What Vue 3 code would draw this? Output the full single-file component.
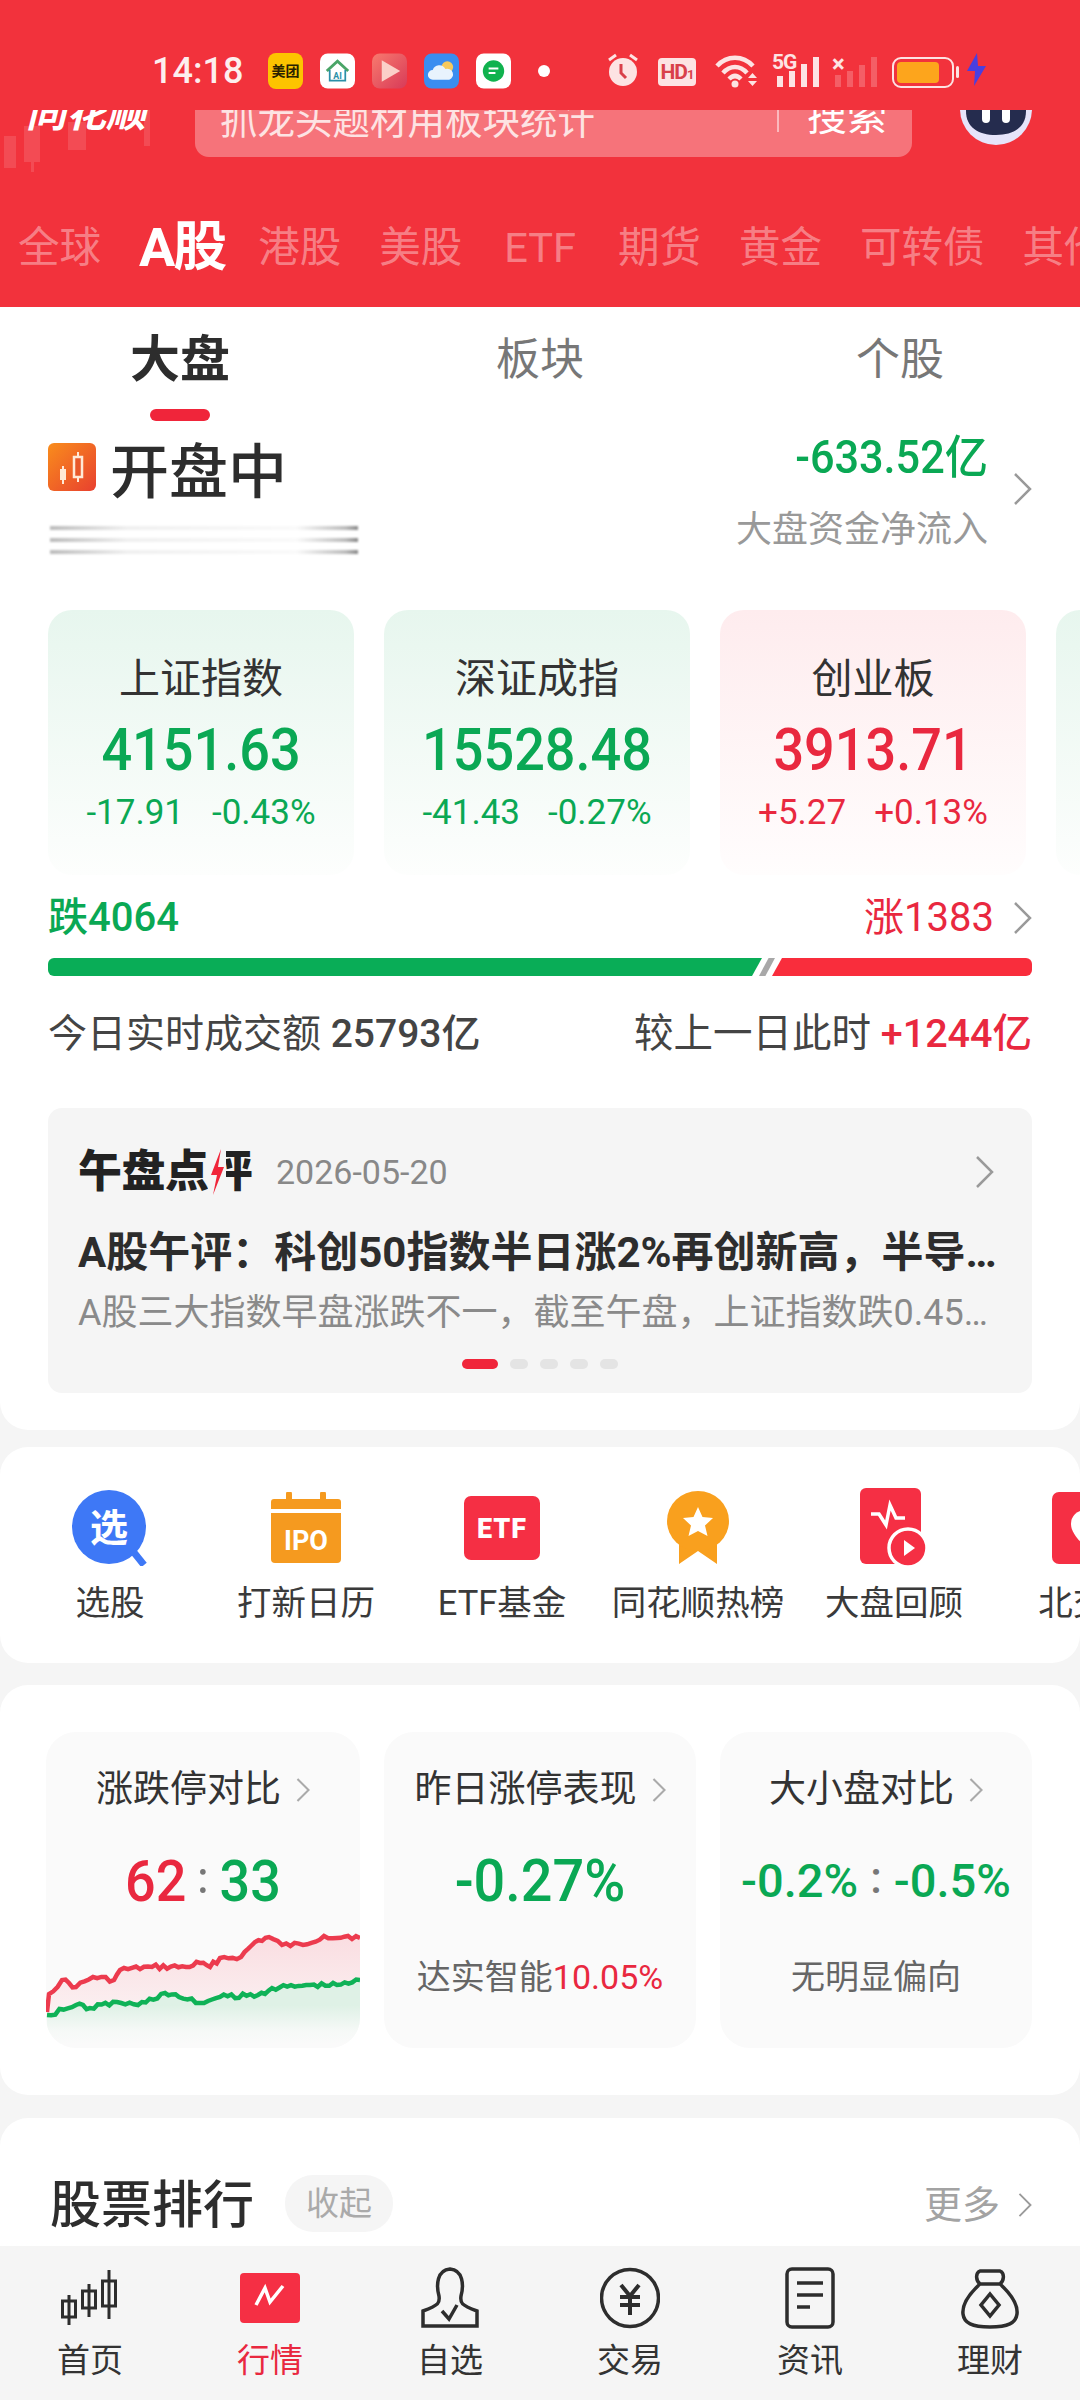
<script setup>
const marketTabs = ['全球', 'A股', '港股', '美股', 'ETF', '期货', '黄金', '可转债', '其他']
const indexes = [
  { name: '上证指数', value: '4151.63', diff: '-17.91', pct: '-0.43%', down: true },
  { name: '深证成指', value: '15528.48', diff: '-41.43', pct: '-0.27%', down: true },
  { name: '创业板', value: '3913.71', diff: '+5.27', pct: '+0.13%', down: false }
]
const shortcuts = [
  { key: 'pick', label: '选股' },
  { key: 'ipo', label: '打新日历' },
  { key: 'etf', label: 'ETF基金' },
  { key: 'rank', label: '同花顺热榜' },
  { key: 'review', label: '大盘回顾' },
  { key: 'north', label: '北交所' }
]

// 折线带一点抖动，种子固定保证每次结果一样
const jagged = (points, seed) => {
  let s = seed
  const rand = () => {
    s = (s * 9301 + 49297) % 233280
    return s / 233280 - 0.5
  }
  const out = []
  for (let i = 0; i < points.length - 1; i++) {
    const [x0, y0] = points[i]
    const [x1, y1] = points[i + 1]
    const steps = Math.max(1, Math.round((x1 - x0) / 4))
    for (let j = 0; j < steps; j++) {
      const t = j / steps
      out.push([x0 + (x1 - x0) * t, y0 + (y1 - y0) * t + (j === 0 ? 0 : rand() * 5)])
    }
  }
  out.push(points[points.length - 1])
  return out.map(p => p[0].toFixed(1) + ' ' + p[1].toFixed(1))
}
const redPts = jagged([[1, 80], [3, 62], [16, 48], [30, 55], [47, 45], [68, 48], [74, 38], [106, 35], [140, 35], [154, 31], [164, 35], [174, 26], [195, 25], [209, 10], [223, 5], [236, 13], [257, 13], [278, 4], [291, 6], [302, 4], [314, 6]], 17)
const greenPts = jagged([[1, 83], [30, 73], [44, 76], [71, 70], [92, 73], [119, 61], [133, 65], [154, 71], [174, 65], [212, 63], [226, 56], [264, 53], [291, 53], [314, 48]], 41)
const redLine = 'M' + redPts.join(' L')
const greenLine = 'M' + greenPts.join(' L')
const redArea = redLine + ' L' + greenPts.slice().reverse().join(' L') + ' Z'
const greenArea = greenLine + ' L314 112 L1 112 Z'
</script>

<template>
  <div class="page">
    <header class="top">
      <div class="status">
        <span class="time">14:18</span>
        <span class="app app-meituan">美团</span>
        <svg class="app" viewBox="0 0 36 36">
          <rect width="36" height="36" rx="8" fill="#fff" />
          <path d="M7 18 L18 8 L29 18" fill="none" stroke="#4aa567" stroke-width="3" />
          <path d="M10 17 V28 H26 V17" fill="none" stroke="#2a8fa8" stroke-width="1.8" />
          <text x="18" y="26" text-anchor="middle" font-size="9" font-weight="700" fill="#2a8fa8">AI</text>
        </svg>
        <svg class="app" viewBox="0 0 36 36">
          <defs>
            <linearGradient id="playBg" x1="0" y1="0" x2="1" y2="1">
              <stop offset="0" stop-color="#f87a6e" />
              <stop offset="1" stop-color="#d83a58" />
            </linearGradient>
          </defs>
          <rect width="36" height="36" rx="8" fill="url(#playBg)" />
          <path d="M10 7 L29 18 L10 29 Z" fill="#fbd0c8" />
        </svg>
        <svg class="app" viewBox="0 0 36 36">
          <rect width="36" height="36" rx="8" fill="#3a8df0" />
          <circle cx="24" cy="14" r="6" fill="#f7c95c" />
          <path d="M9 27 a5 5 0 0 1 0-10 a7 7 0 0 1 13-1 a5.5 5.5 0 0 1 4 11 Z" fill="#e8f3fd" />
        </svg>
        <svg class="app" viewBox="0 0 36 36">
          <rect width="36" height="36" rx="8" fill="#fff" />
          <circle cx="18" cy="18" r="11" fill="#10b24e" />
          <path d="M13 15.500 H23 M13 20 H20" stroke="#fff" stroke-width="2" />
        </svg>
        <span class="dot"></span>
        <svg class="ic-alarm" viewBox="0 0 32 34">
          <circle cx="16" cy="19" r="14" fill="#fde3e3" />
          <path d="M2 7 L9 2 M30 7 L23 2" stroke="#fde3e3" stroke-width="3" />
          <path d="M14 11 V20 L19 25" fill="none" stroke="#d9404a" stroke-width="3" />
        </svg>
        <span class="hd">HD<small>1</small></span>
        <svg class="ic-wifi" viewBox="0 0 44 35">
          <path d="M2 13 C12 2 28 2 38 13 M8 20 C15 12 25 12 32 20 M14 26 C18 22 22 22 26 26" fill="none" stroke="#fde3e3" stroke-width="4.500" />
          <circle cx="20" cy="31" r="3.500" fill="#fde3e3" />
          <path d="M33 25 L37.500 20 L42 25 Z M33 28 H42 L37.500 33 Z" fill="#fde3e3" />
        </svg>
        <span class="signal">
          <i class="g5">5G</i>
          <b style="height: 11px"></b><b style="height: 16px"></b><b style="height: 23px"></b><b style="height: 30px"></b>
        </span>
        <span class="signal off">
          <i class="x">×</i>
          <b style="height: 12px"></b><b style="height: 16px"></b><b style="height: 22px"></b><b style="height: 30px"></b>
        </span>
        <span class="battery"><span class="level"></span></span>
        <svg class="ic-bolt" viewBox="0 0 21 33">
          <path d="M11 0 L1 18 H9 L8 33 L20 13 H12 Z" fill="#4a3fe0" />
        </svg>
      </div>

      <div class="search-row">
        <div class="logo">
          <span class="logo-text">同花顺</span>
          <svg class="logo-bg" viewBox="0 0 160 64">
            <g fill="#fff" opacity="0.12">
              <rect x="4" y="26" width="12" height="32" />
              <rect x="24" y="16" width="16" height="36" />
              <rect x="31" y="8" width="3" height="54" />
              <rect x="68" y="12" width="18" height="28" />
              <rect x="144" y="0" width="6" height="36" />
            </g>
          </svg>
        </div>
        <div class="search">
          <span class="search-text">抓龙头题材用板块统计</span>
          <span class="search-btn">搜索</span>
        </div>
        <svg class="robot" viewBox="0 0 72 72">
          <circle cx="36" cy="36" r="36" fill="#e6e4fa" />
          <path d="M6 0 H66 V38 C66 54 54 62 36 62 C18 62 6 54 6 38 Z" fill="#252c4e" />
          <rect x="22" y="30" width="8" height="20" rx="4" fill="#fff" />
          <rect x="42" y="30" width="8" height="20" rx="4" fill="#fff" />
        </svg>
      </div>

      <nav class="market-tabs">
        <span v-for="tab in marketTabs" :key="tab" class="market-tab" :class="{ active: tab === 'A股', latin: tab === 'ETF' }">{{ tab }}</span>
      </nav>
    </header>

    <section class="panel">
      <div class="tabs">
        <div class="tab active">大盘<span class="tab-line"></span></div>
        <div class="tab">板块</div>
        <div class="tab">个股</div>
      </div>

      <div class="state">
        <div class="state-left">
          <div class="state-title">
            <svg class="state-icon" viewBox="0 0 48 48">
              <defs>
                <linearGradient id="stateBg" x1="0" y1="0" x2="1" y2="1">
                  <stop offset="0" stop-color="#f98d1c" />
                  <stop offset="1" stop-color="#e8402f" />
                </linearGradient>
              </defs>
              <rect width="48" height="48" rx="6" fill="url(#stateBg)" />
              <path d="M15 23 V41 M30 9 V39" stroke="#ffe9d6" stroke-width="2" />
              <rect x="12" y="26" width="6" height="11" fill="#ffe9d6" />
              <rect x="26" y="14" width="8" height="20" fill="#e8582a" stroke="#ffe9d6" stroke-width="2.500" />
            </svg>
            <span class="state-text">开盘中</span>
          </div>
          <div class="smear">
            <i></i><i></i><i></i>
          </div>
        </div>
        <div class="state-right">
          <div class="flow-num">-633.52亿</div>
          <div class="flow-label">大盘资金净流入</div>
        </div>
        <svg class="chev state-chev" viewBox="0 0 19 32"><path d="M2 1 L17 16 L2 31" /></svg>
      </div>

      <div class="index-row">
        <div v-for="item in indexes" :key="item.name" class="index-card" :class="item.down ? 'down' : 'up'">
          <div class="index-name">{{ item.name }}</div>
          <div class="index-value">{{ item.value }}</div>
          <div class="index-sub"><span>{{ item.diff }}</span><span>{{ item.pct }}</span></div>
        </div>
        <div class="index-card down"></div>
      </div>

      <div class="count-row">
        <span class="green">跌4064</span>
        <span class="count-up"><span class="red">涨1383</span><svg class="chev" viewBox="0 0 19 32"><path d="M2 1 L17 16 L2 31" /></svg></span>
      </div>
      <div class="ratio">
        <div class="ratio-green"></div>
        <div class="ratio-gap"></div>
        <div class="ratio-red"></div>
      </div>

      <div class="turnover">
        <span class="turnover-left">今日实时成交额 <b>25793亿</b></span>
        <span>较上一日此时 <b class="red">+1244亿</b></span>
      </div>

      <div class="news">
        <div class="news-head">
          <span class="news-logo">午盘点评
            <svg class="news-bolt" viewBox="0 0 18 48">
              <rect width="18" height="48" fill="#f5f5f5" />
              <path d="M13 1 L3 27 H9 L5 47 L16 19 H10 Z" fill="#f0253a" />
            </svg>
          </span>
          <span class="news-date">2026-05-20</span>
          <svg class="chev news-chev" viewBox="0 0 19 32"><path d="M2 1 L17 16 L2 31" /></svg>
        </div>
        <div class="news-title">A股午评：科创50指数半日涨2%再创新高，半导体板块走强</div>
        <div class="news-desc">A股三大指数早盘涨跌不一，截至午盘，上证指数跌0.45%，深成指跌</div>
        <div class="news-dots"><i class="on"></i><i></i><i></i><i></i><i></i></div>
      </div>
    </section>

    <section class="card shortcuts">
      <div v-for="item in shortcuts" :key="item.key" class="shortcut">
        <div class="shortcut-icon">
          <svg v-if="item.key === 'pick'" width="76" height="76" viewBox="0 0 76 76">
            <circle cx="37" cy="37" r="37" fill="#3e78f6" />
            <path d="M60 60 L72 75" stroke="#3e78f6" stroke-width="7" />
            <text x="37" y="51" text-anchor="middle" font-size="38" font-weight="700" fill="#fff" font-family="Noto Sans CJK SC, sans-serif">选</text>
          </svg>
          <svg v-else-if="item.key === 'ipo'" width="70" height="72" viewBox="0 0 70 72">
            <path d="M0 10 a3 3 0 0 1 3-3 H15 V2 a3 3 0 0 1 6 0 V7 H49 V2 a3 3 0 0 1 6 0 V7 H67 a3 3 0 0 1 3 3 V17 H0 Z" fill="#f59a1f" />
            <path d="M0 21 H70 V67 a4 4 0 0 1-4 4 H4 a4 4 0 0 1-4-4 Z" fill="#f59a1f" />
            <text x="35" y="58" text-anchor="middle" font-size="27" font-weight="700" fill="#fff" font-family="Roboto, sans-serif">IPO</text>
          </svg>
          <svg v-else-if="item.key === 'etf'" width="76" height="64" viewBox="0 0 76 64">
            <rect width="76" height="64" rx="7" fill="#f52f44" />
            <text x="38" y="42" text-anchor="middle" font-size="27" font-weight="900" fill="#fff" font-family="Roboto, sans-serif" letter-spacing="1">ETF</text>
          </svg>
          <svg v-else-if="item.key === 'rank'" width="62" height="74" viewBox="0 0 62 74">
            <path d="M12 50 V73 L31 60 L50 73 V50 Z" fill="#f9a01e" />
            <ellipse cx="31" cy="30" rx="31" ry="30" fill="#f9a01e" />
            <path d="M31 16 L35.500 26 L46 27 L38 34.500 L40.500 45 L31 40 L21.500 45 L24 34.500 L16 27 L26.500 26 Z" fill="#fff" />
          </svg>
          <svg v-else-if="item.key === 'review'" width="68" height="80" viewBox="0 0 68 80">
            <rect x="0" y="0" width="61" height="76" rx="6" fill="#f52f44" />
            <path d="M11 26 H19 L26 37 L30 17 L36 30 H45" fill="none" stroke="#fff" stroke-width="3.500" />
            <circle cx="48" cy="60" r="19" fill="#f52f44" stroke="#fff" stroke-width="3.500" />
            <path d="M44 52 L55 60 L44 68 Z" fill="#fff" />
          </svg>
          <svg v-else width="76" height="72" viewBox="0 0 76 72">
            <rect width="76" height="72" rx="7" fill="#f52f44" />
            <path d="M19 32 a14 14 0 1 1 28 0 c0 11-14 22-14 22 s-14-11-14-22 Z" fill="#fff" />
          </svg>
        </div>
        <div class="shortcut-label">{{ item.label }}</div>
      </div>
    </section>

    <section class="card compare">
      <div class="compare-card">
        <div class="compare-title">涨跌停对比<svg class="chev" viewBox="0 0 19 32"><path d="M2 1 L17 16 L2 31" /></svg></div>
        <div class="compare-num"><span class="red">62</span><em>:</em><span class="green">33</span></div>
        <svg class="compare-chart" viewBox="0 0 314 112" preserveAspectRatio="none">
          <defs>
            <linearGradient id="redFill" x1="0" y1="0" x2="0" y2="1">
              <stop offset="0" stop-color="#fadde1" />
              <stop offset="1" stop-color="#fbf1f2" />
            </linearGradient>
            <linearGradient id="greenFill" x1="0" y1="0" x2="0" y2="1">
              <stop offset="0.4" stop-color="#dff1e6" />
              <stop offset="0.8" stop-color="#f6f9f7" />
              <stop offset="1" stop-color="#fafafa" />
            </linearGradient>
          </defs>
          <path :d="greenArea" fill="url(#greenFill)" />
          <path :d="redArea" fill="url(#redFill)" />
          <path :d="redLine" fill="none" stroke="#ec3b4e" stroke-width="4.500" />
          <path :d="greenLine" fill="none" stroke="#0fb257" stroke-width="4.500" />
        </svg>
      </div>
      <div class="compare-card">
        <div class="compare-title">昨日涨停表现<svg class="chev" viewBox="0 0 19 32"><path d="M2 1 L17 16 L2 31" /></svg></div>
        <div class="compare-num green single">-0.27%</div>
        <div class="compare-sub">达实智能<span class="red">10.05%</span></div>
      </div>
      <div class="compare-card">
        <div class="compare-title">大小盘对比<svg class="chev" viewBox="0 0 19 32"><path d="M2 1 L17 16 L2 31" /></svg></div>
        <div class="compare-num small green">-0.2%<em>:</em>-0.5%</div>
        <div class="compare-sub">无明显偏向</div>
      </div>
    </section>

    <section class="rank">
      <span class="rank-title">股票排行</span>
      <span class="rank-pill">收起</span>
      <span class="rank-more">更多<svg class="chev" viewBox="0 0 19 32"><path d="M2 1 L17 16 L2 31" /></svg></span>
    </section>

    <nav class="bottom">
      <div class="bottom-item">
        <svg width="60" height="62" viewBox="0 0 60 62">
          <g fill="none" stroke="#2d2d2d" stroke-width="3">
            <path d="M9 28 V58 M2.500 34 H15.500 V50 H2.500 Z" />
            <path d="M29 17 V50 M22.500 24 H35.500 V41 H22.500 Z" />
            <path d="M49 3 V52 M42.500 14 H55.500 V39 H42.500 Z" />
          </g>
        </svg>
        <span>首页</span>
      </div>
      <div class="bottom-item active">
        <svg width="60" height="62" viewBox="0 0 60 62">
          <rect y="6" width="60" height="50" rx="4" fill="#f52f44" />
          <path d="M16 38 L25 21 L30 35 L43 19" fill="none" stroke="#fff" stroke-width="3.500" />
        </svg>
        <span>行情</span>
      </div>
      <div class="bottom-item">
        <svg width="60" height="62" viewBox="0 0 60 62">
          <path d="M19 29 C16 18 17 3 30 2 C43 3 44 18 41 29 C40 36 41 38 57 44 V59 H3 V44 C19 38 20 36 19 29 Z" fill="none" stroke="#2d2d2d" stroke-width="3.500" />
          <path d="M22 44 L29 52 L37 38" fill="none" stroke="#2d2d2d" stroke-width="3.500" />
        </svg>
        <span>自选</span>
      </div>
      <div class="bottom-item">
        <svg width="60" height="62" viewBox="0 0 60 62">
          <circle cx="30" cy="31" r="28.500" fill="none" stroke="#2d2d2d" stroke-width="3.500" />
          <path d="M21 18 L30 29 L39 18 M20 30 H40 M20 38 H40 M30 29 V48" fill="none" stroke="#2d2d2d" stroke-width="4" />
        </svg>
        <span>交易</span>
      </div>
      <div class="bottom-item">
        <svg width="60" height="62" viewBox="0 0 60 62">
          <rect x="7" y="2" width="46" height="58" rx="5" fill="none" stroke="#2d2d2d" stroke-width="3.500" />
          <path d="M17 16 H43 M17 28 H43 M17 40 H30" fill="none" stroke="#2d2d2d" stroke-width="3.500" />
        </svg>
        <span>资讯</span>
      </div>
      <div class="bottom-item">
        <svg width="60" height="62" viewBox="0 0 60 62">
          <path d="M20 17 C16 14 15 6 20 4 H40 C45 6 44 14 40 17 C52 28 58 38 57 47 C56 56 48 60 30 60 C12 60 4 56 3 47 C2 38 8 28 20 17 Z M20 17 H40" fill="none" stroke="#2d2d2d" stroke-width="3.500" />
          <path d="M30 27 L39 38 L30 49 L21 38 Z" fill="none" stroke="#2d2d2d" stroke-width="3.500" />
        </svg>
        <span>理财</span>
      </div>
    </nav>
  </div>
</template>

<style>
html, body {
  margin: 0;
  background: #f5f5f5;
}
</style>

<style scoped>
.page {
  width: 1080px;
  height: 2400px;
  overflow: hidden;
  background: #f5f5f5;
  color: #333;
  font-family: Roboto, "Noto Sans CJK SC", sans-serif;
}

.red { color: #e9283f; }
.green { color: #0aa854; }

.chev {
  flex: none;
  width: 19px;
  height: 32px;
}
.chev path {
  fill: none;
  stroke: #9a9a9a;
  stroke-width: 2.500;
}

/* 顶部红色区域 */
.top {
  height: 307px;
  background: #f2323c;
}
.status {
  height: 110px;
  box-sizing: border-box;
  padding: 32px 0 0 152px;
  display: flex;
  align-items: flex-start;
}
.status > * {
  margin-top: 21px;
  flex: none;
}
.time {
  width: 93px;
  height: 36px;
  line-height: 36px;
  font-size: 36px;
  font-weight: 500;
  color: #fdeeee;
  margin-right: 23px;
}
.app {
  width: 35px;
  height: 36px;
  margin-right: 17px;
}
.app-meituan {
  border-radius: 8px;
  background: #fdc400;
  color: #2a2200;
  font-size: 14px;
  font-weight: 700;
  line-height: 36px;
  text-align: center;
  white-space: nowrap;
}
.dot {
  width: 12px;
  height: 12px;
  border-radius: 50%;
  background: #fff;
  margin: 33px 57px 0 10px;
}
.ic-alarm {
  width: 32px;
  height: 34px;
  margin-right: 19px;
}
.hd {
  width: 38px;
  height: 28px;
  margin-top: 26px;
  margin-right: 19px;
  border-radius: 4px;
  background: #fde3e3;
  color: #d9404a;
  font-size: 21px;
  line-height: 28px;
  font-weight: 700;
  text-align: center;
  letter-spacing: -1px;
  white-space: nowrap;
}
.hd small {
  font-size: 13px;
}
.ic-wifi {
  width: 44px;
  height: 35px;
  margin-right: 13px;
}
.signal {
  position: relative;
  width: 47px;
  height: 34px;
  display: flex;
  align-items: flex-end;
  justify-content: flex-end;
  gap: 6px;
  margin-right: 13px;
  margin-top: 21px;
}
.signal b {
  width: 6px;
  background: #fde3e3;
}
.signal.off {
  width: 45px;
  margin-right: 15px;
}
.signal.off b {
  background: rgba(253, 227, 227, 0.25);
}
.signal i {
  position: absolute;
  left: 0;
  top: -1px;
  font-style: normal;
  color: #fde3e3;
  font-weight: 700;
  line-height: 1;
}
.g5 {
  font-size: 21px;
  letter-spacing: -1px;
}
.x {
  font-size: 24px;
  left: 1px;
}
.battery {
  position: relative;
  width: 62px;
  height: 31px;
  margin-top: 25px;
  margin-right: 12px;
  box-sizing: border-box;
  border: 2px solid #fde3e3;
  border-radius: 9px;
  padding: 3px;
}
.battery::after {
  content: "";
  position: absolute;
  right: -7px;
  top: 7px;
  width: 3px;
  height: 12px;
  background: #fde3e3;
  border-radius: 2px;
}
.level {
  display: block;
  width: 42px;
  height: 21px;
  background: #fda51c;
  border-radius: 4px;
}
.ic-bolt {
  width: 21px;
  height: 33px;
}

.search-row {
  height: 47px;
  display: flex;
  align-items: flex-end;
  clip-path: inset(0 0 -40px 0);
  position: relative;
}
.logo {
  width: 195px;
  height: 47px;
  position: relative;
  flex: none;
}
.logo-text {
  position: absolute;
  left: 26px;
  bottom: 18px;
  font-size: 40px;
  line-height: 50px;
  font-weight: 700;
  font-style: italic;
  color: #fff;
  white-space: nowrap;
}
.logo-bg {
  position: absolute;
  left: 0;
  top: 0;
  width: 160px;
  height: 64px;
}
.search {
  width: 717px;
  height: 80px;
  flex: none;
  display: flex;
  align-items: center;
  box-sizing: border-box;
  padding-left: 25px;
  background: rgba(255, 255, 255, 0.32);
  border-radius: 14px;
  color: #fde3e3;
  font-size: 37.500px;
}
.search-text {
  width: 557px;
  white-space: nowrap;
}
.search-btn {
  padding-left: 28px;
  border-left: 2px solid rgba(255, 255, 255, 0.5);
  font-size: 40px;
  line-height: 30px;
  color: #fff;
}
.robot {
  position: absolute;
  left: 960px;
  top: -37px;
  width: 72px;
  height: 72px;
}

.market-tabs {
  height: 150px;
  box-sizing: border-box;
  padding: 32px 0 0 18px;
  display: flex;
  align-items: center;
  overflow: hidden;
  white-space: nowrap;
}
.market-tab {
  flex: none;
  margin-right: 38px;
  font-size: 41.500px;
  line-height: 82px;
  color: rgba(255, 255, 255, 0.4);
}
.market-tab.active {
  font-size: 54px;
  font-weight: 700;
  color: #fff;
  letter-spacing: -2px;
  margin-right: 33px;
}
.market-tab.latin {
  margin-left: 4px;
  margin-right: 42px;
}

/* 大盘面板 */
.panel {
  height: 1123px;
  background: #fff;
  border-radius: 0 0 28px 28px;
  overflow: hidden;
}
.tabs {
  height: 114px;
  display: flex;
}
.tab {
  flex: 1;
  display: flex;
  flex-direction: column;
  align-items: center;
  padding-top: 23px;
  font-size: 44px;
  line-height: 60px;
  color: #777;
}
.tab.active {
  font-size: 50px;
  font-weight: 700;
  color: #2d2d2d;
}
.tab-line {
  width: 60px;
  height: 12px;
  margin-top: 19px;
  border-radius: 6px;
  background: #f0253a;
}
.state {
  height: 177px;
  margin-top: 12px;
  padding: 0 48px;
  display: flex;
  align-items: flex-start;
}
.state-left {
  flex: 1;
}
.state-title {
  height: 74px;
  display: flex;
  align-items: center;
  gap: 14px;
  font-size: 59px;
  font-weight: 500;
  color: #2d2d2d;
}
.state-text {
  margin-top: -6px;
}
.state-icon {
  width: 48px;
  height: 48px;
  margin-top: -6px;
}
.smear {
  width: 308px;
  height: 35px;
  margin-top: 15px;
  margin-left: 2px;
  display: flex;
  flex-direction: column;
  justify-content: center;
  gap: 8px;
}
.smear i {
  display: block;
  height: 4px;
  background: linear-gradient(90deg, #bbb, #f0f0f0 25%, #fafafa 80%, #bbb 96%, #888);
  filter: blur(1px);
}
.state-right {
  text-align: right;
}
.flow-num {
  font-size: 46px;
  line-height: 48px;
  font-weight: 500;
  color: #0aa854;
  transform: scaleX(0.94);
  transform-origin: right center;
}
.flow-label {
  margin-top: 29px;
  font-size: 36px;
  line-height: 40px;
  color: #999;
}
.state-chev {
  margin: 40px 0 0 25px;
}

.index-row {
  height: 265px;
  display: flex;
  gap: 30px;
  padding-left: 48px;
  overflow: hidden;
}
.index-card {
  flex: none;
  width: 306px;
  height: 265px;
  box-sizing: border-box;
  padding-top: 44px;
  border-radius: 24px;
  text-align: center;
}
.index-card.down {
  background: linear-gradient(180deg, #e7f6ee 0%, #fdfefd 100%);
  color: #0aa854;
}
.index-card.up {
  background: linear-gradient(180deg, #feecee 0%, #fffdfd 100%);
  color: #e9283f;
}
.index-name {
  font-size: 41px;
  line-height: 50px;
  color: #333;
}
.index-value {
  margin-top: 14px;
  font-size: 60px;
  line-height: 64px;
  font-weight: 500;
  transform: scaleX(0.9);
}
.index-sub {
  margin-top: 11px;
  display: flex;
  justify-content: center;
  gap: 28px;
  font-size: 35px;
  line-height: 40px;
}

.count-row {
  height: 50px;
  margin-top: 18px;
  padding: 0 48px;
  display: flex;
  justify-content: space-between;
  align-items: center;
  font-size: 40px;
  line-height: 50px;
  font-weight: 500;
}
.count-up {
  display: flex;
  align-items: center;
  gap: 19px;
  font-weight: 400;
}
.ratio {
  height: 18px;
  margin: 15px 48px 0;
  display: flex;
  border-radius: 6px;
  overflow: hidden;
}
.ratio-green {
  width: 714px;
  background: #09ad57;
  clip-path: polygon(0 0, 100% 0, calc(100% - 10px) 100%, 0 100%);
}
.ratio-gap {
  width: 16px;
  margin-left: -3px;
  background: #a8a8a8;
  clip-path: polygon(60% 0, 100% 0, 40% 100%, 0 100%);
}
.ratio-red {
  flex: 1;
  margin-left: -3px;
  background: #f92d3c;
  clip-path: polygon(10px 0, 100% 0, 100% 100%, 0 100%);
}
.turnover {
  height: 50px;
  margin-top: 33px;
  padding: 0 48px;
  display: flex;
  justify-content: space-between;
  font-size: 39.500px;
  line-height: 50px;
  color: #444;
}
.turnover-left {
  font-size: 39px;
}
.turnover b {
  font-weight: 500;
}

.news {
  height: 285px;
  margin: 49px 48px 0;
  box-sizing: border-box;
  padding: 39px 30px 0;
  background: #f5f5f5;
  border-radius: 14px;
}
.news-head {
  height: 50px;
  display: flex;
  align-items: center;
}
.news-logo {
  position: relative;
  font-size: 44px;
  font-weight: 900;
  line-height: 50px;
  color: #222;
  letter-spacing: -0.500px;
  white-space: nowrap;
}
.news-bolt {
  position: absolute;
  left: 130px;
  top: 1px;
  width: 18px;
  height: 48px;
}
.news-date {
  margin-left: 24px;
  font-size: 34px;
  color: #888;
}
.news-chev {
  margin-left: auto;
  margin-right: 8px;
}
.news-title {
  margin-top: 31px;
  font-size: 42px;
  line-height: 50px;
  font-weight: 700;
  color: #2d2d2d;
  white-space: nowrap;
  overflow: hidden;
  text-overflow: ellipsis;
}
.news-desc {
  margin-top: 12px;
  font-size: 36px;
  line-height: 46px;
  color: #8a8a8a;
  white-space: nowrap;
  overflow: hidden;
  text-overflow: ellipsis;
}
.news-dots {
  margin-top: 23px;
  display: flex;
  justify-content: center;
  gap: 12px;
}
.news-dots i {
  width: 18px;
  height: 10px;
  border-radius: 5px;
  background: #e4e4e4;
}
.news-dots i.on {
  width: 36px;
  background: #f0253a;
}

.card {
  background: #fff;
  border-radius: 28px;
  overflow: hidden;
}
.shortcuts {
  height: 216px;
  margin-top: 17px;
  display: flex;
  padding-left: 12px;
}
.shortcut {
  flex: none;
  width: 196px;
  text-align: center;
}
.shortcut-icon {
  height: 80px;
  margin-top: 41px;
  display: flex;
  align-items: center;
  justify-content: center;
}
.shortcut-label {
  margin-top: 13px;
  font-size: 34.500px;
  line-height: 44px;
  color: #3a3a3a;
  white-space: nowrap;
}

.compare {
  height: 410px;
  margin-top: 22px;
  box-sizing: border-box;
  padding: 47px 48px 0 46px;
  display: grid;
  grid-template-columns: 314px 312px 312px;
  gap: 24px;
}
.compare-card {
  height: 316px;
  box-sizing: border-box;
  padding-top: 38px;
  background: #fafafa;
  border-radius: 30px;
  overflow: hidden;
  text-align: center;
}
.compare-title {
  height: 40px;
  display: flex;
  justify-content: center;
  align-items: center;
  gap: 15px;
  font-size: 37px;
  line-height: 40px;
  color: #333;
}
.compare-title .chev {
  width: 14px;
  height: 24px;
}
.compare-title .chev path {
  stroke: #aaa;
  stroke-width: 2.800;
}
.compare-num {
  margin-top: 41px;
  height: 60px;
  display: flex;
  justify-content: center;
  align-items: center;
  font-size: 58px;
  line-height: 60px;
  font-weight: 500;
  transform: scaleX(0.93);
}
.compare-num em {
  margin: -6px 12px 0;
  font-style: normal;
  font-size: 44px;
  color: #777;
}
.compare-num.single {
  font-size: 60px;
}
.compare-num.small {
  font-size: 47px;
  white-space: nowrap;
  transform: none;
}
.compare-sub {
  margin-top: 46px;
  font-size: 34px;
  line-height: 40px;
  color: #666;
  white-space: nowrap;
}
.compare-chart {
  display: block;
  width: 314px;
  height: 112px;
  margin-top: 21px;
}

.rank {
  height: 128px;
  margin-top: 23px;
  box-sizing: border-box;
  padding: 57px 48px 0 50px;
  background: #fff;
  border-radius: 28px 28px 0 0;
  display: flex;
  align-items: flex-start;
}
.rank-title {
  margin-top: 3px;
  font-size: 51px;
  line-height: 56px;
  font-weight: 500;
  color: #2d2d2d;
}
.rank-pill {
  width: 108px;
  height: 57px;
  margin-left: 31px;
  border-radius: 28px;
  background: #f5f5f5;
  color: #aaa;
  font-size: 33px;
  line-height: 57px;
  text-align: center;
}
.rank-more {
  margin-left: auto;
  margin-top: 2px;
  display: flex;
  align-items: center;
  gap: 18px;
  color: #a3a3a3;
  font-size: 38px;
  line-height: 56px;
}
.rank-more .chev {
  width: 14px;
}

.bottom {
  height: 154px;
  display: flex;
  background: #f5f5f5;
}
.bottom-item {
  flex: 1;
  display: flex;
  flex-direction: column;
  align-items: center;
  padding-top: 21px;
  font-size: 33px;
  color: #333;
}
.bottom-item span {
  margin-top: 9px;
  line-height: 46px;
}
.bottom-item.active {
  color: #e9283f;
}
</style>
